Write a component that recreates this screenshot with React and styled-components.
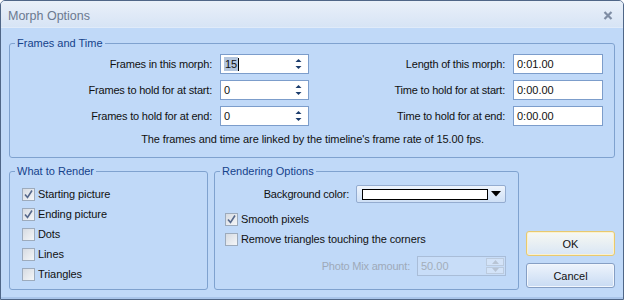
import React from 'react';
import styled, { createGlobalStyle } from 'styled-components';

const frameRows = [
  { label: 'Frames in this morph:', value: '15', selected: true, timeLabel: 'Length of this morph:', time: '0:01.00' },
  { label: 'Frames to hold for at start:', value: '0', timeLabel: 'Time to hold for at start:', time: '0:00.00' },
  { label: 'Frames to hold for at end:', value: '0', timeLabel: 'Time to hold for at end:', time: '0:00.00' },
];

const renderItems = [
  { label: 'Starting picture', checked: true },
  { label: 'Ending picture', checked: true },
  { label: 'Dots', checked: false },
  { label: 'Lines', checked: false },
  { label: 'Triangles', checked: false },
];

const SpinArrows = ({ color = '#1b3c6c' }) => (
  <svg width="7" height="12" viewBox="0 0 7 12">
    <polygon points="3.5,1 6.5,4 0.5,4" fill={color} />
    <polygon points="0.5,8 6.5,8 3.5,11" fill={color} />
  </svg>
);

const CheckBox = ({ checked, label }) => (
  <CheckRow>
    <Box>
      {checked && (
        <svg width="11" height="11" viewBox="0 0 11 11">
          <path d="M2 5.5 L4.5 8.5 L9 1.5" fill="none" stroke="#56698c" strokeWidth="1.6" />
        </svg>
      )}
    </Box>
    <span>{label}</span>
  </CheckRow>
);

const App = () => {
  return (
    <>
      <GlobalStyle />
      <Window>
        <TitleBar>
          <Title>Morph Options</Title>
          <CloseIcon width="10" height="9" viewBox="0 0 10 9">
            <path d="M1.5 1 L8.5 8 M8.5 1 L1.5 8" stroke="#7f8da4" strokeWidth="2.2" />
          </CloseIcon>
        </TitleBar>

        <Body>
          <Group>
            <GroupTitle>Frames and Time</GroupTitle>
            <FramesContent>
              <FrameGrid>
                {frameRows.map(row => (
                  <React.Fragment key={row.label}>
                    <Label>{row.label}</Label>
                    <Field>
                      <FieldText>
                        {row.selected ? <Selected>{row.value}</Selected> : row.value}
                        {row.selected && <Caret />}
                      </FieldText>
                      <SpinArrows />
                    </Field>
                    <Label>{row.timeLabel}</Label>
                    <Field>
                      <FieldText>{row.time}</FieldText>
                    </Field>
                  </React.Fragment>
                ))}
              </FrameGrid>
              <Info>The frames and time are linked by the timeline's frame rate of 15.00 fps.</Info>
            </FramesContent>
          </Group>

          <BottomRow>
            <Group $width={199}>
              <GroupTitle>What to Render</GroupTitle>
              <RenderList>
                {renderItems.map(item => (
                  <CheckBox key={item.label} checked={item.checked} label={item.label} />
                ))}
              </RenderList>
            </Group>

            <Group $width={305}>
              <GroupTitle>Rendering Options</GroupTitle>
              <OptionsContent>
                <RightRow>
                  <Label>Background color:</Label>
                  <ColorPicker>
                    <Swatch />
                    <svg width="10" height="6" viewBox="0 0 10 6">
                      <polygon points="0,0 10,0 5,5.5" fill="#000" />
                    </svg>
                  </ColorPicker>
                </RightRow>
                <Spacer $h={5} />
                <CheckBox checked label="Smooth pixels" />
                <CheckBox checked={false} label="Remove triangles touching the corners" />
                <Spacer $h={7} />
                <RightRow>
                  <Label $disabled>Photo Mix amount:</Label>
                  <Field $disabled>
                    <FieldText>50.00</FieldText>
                    <SpinButtons>
                      <SpinHalf>
                        <svg width="7" height="4" viewBox="0 0 7 4"><polygon points="3.5,0 7,4 0,4" fill="#b8c4d4" /></svg>
                      </SpinHalf>
                      <SpinHalf>
                        <svg width="7" height="4" viewBox="0 0 7 4"><polygon points="0,0 7,0 3.5,4" fill="#b8c4d4" /></svg>
                      </SpinHalf>
                    </SpinButtons>
                  </Field>
                </RightRow>
              </OptionsContent>
            </Group>

            <ButtonColumn>
              <Button $default>OK</Button>
              <Button>Cancel</Button>
            </ButtonColumn>
          </BottomRow>
        </Body>
      </Window>
    </>
  );
};

export default App;

// Styled Components
const GlobalStyle = createGlobalStyle`
  html, body {
    margin: 0;
    padding: 0;
    background: #ffffff;
  }
  body {
    font-family: "Liberation Sans", Arial, sans-serif;
    font-size: 11px;
    color: #111;
  }
  * {
    box-sizing: border-box;
  }
`;

const Window = styled.div`
  width: 624px;
  height: 300px;
  display: flex;
  flex-direction: column;
  border: 1px solid #4f6687;
  border-radius: 5px 5px 0 0;
  background: #c0d9f8;
  overflow: hidden;
`;

const TitleBar = styled.div`
  height: 27px;
  flex: none;
  display: flex;
  align-items: center;
  justify-content: space-between;
  padding: 0 10px 0 7px;
  background: linear-gradient(#e9f0f9, #d7e4f5);
  border-bottom: 1px solid #e0ebf9;
`;

const Title = styled.div`
  font-size: 12.5px;
  color: #6b7990;
  padding-top: 3px;
`;

const CloseIcon = styled.svg`
  margin-top: 2px;
`;

const Body = styled.div`
  flex: 1;
  display: flex;
  flex-direction: column;
  padding: 8px 8px 9px 8px;
  box-shadow: inset 0 -2px 0 #a9c5ea;
`;

const Group = styled.fieldset`
  margin: 0;
  padding: 0;
  min-width: 0;
  width: ${({ $width }) => ($width ? `${$width}px` : 'auto')};
  flex: none;
  border: 1px solid #7fa2cf;
  border-radius: 3px;
`;

const GroupTitle = styled.legend`
  margin-left: 5px;
  padding: 0 2px;
  line-height: 14px;
  font-size: 11px;
  color: #15428b;
`;

const FramesContent = styled.div`
  padding: 4px 11px 11px 12px;
`;

const FrameGrid = styled.div`
  display: grid;
  grid-template-columns: 190px 89px 1fr 90px;
  column-gap: 8px;
  row-gap: 6px;
  align-items: center;
`;

const Label = styled.div`
  text-align: right;
  white-space: nowrap;
  letter-spacing: -0.2px;
  line-height: 14px;
  color: ${({ $disabled }) => ($disabled ? '#9ea9b8' : '#111')};
`;

const Field = styled.div`
  height: 20px;
  width: ${({ $disabled }) => ($disabled ? '89px' : 'auto')};
  display: flex;
  align-items: center;
  padding: 0 ${({ $disabled }) => ($disabled ? '1px' : '6px')} 0 3px;
  border: 1px solid ${({ $disabled }) => ($disabled ? '#a9bdd8' : '#7c9dcb')};
  background: ${({ $disabled }) => ($disabled ? '#c8ddf8' : '#fff')};
  color: ${({ $disabled }) => ($disabled ? '#a3adba' : '#111')};
`;

const FieldText = styled.div`
  flex: 1;
  display: flex;
  align-items: center;
  line-height: 14px;
`;

const Selected = styled.span`
  background: #b3c5dd;
  padding: 0 1px;
`;

const Caret = styled.span`
  width: 1px;
  height: 13px;
  background: #000;
`;

const Info = styled.div`
  margin-top: 6px;
  text-align: center;
  line-height: 14px;
  letter-spacing: -0.1px;
`;

const BottomRow = styled.div`
  flex: 1;
  display: flex;
  gap: 6px;
  margin-top: 6px;
`;

const RenderList = styled.div`
  display: flex;
  flex-direction: column;
  padding: 6px 0 0 12px;
`;

const CheckRow = styled.div`
  height: 20px;
  display: flex;
  align-items: center;
  gap: 3px;
  letter-spacing: -0.1px;
`;

const Box = styled.span`
  width: 13px;
  height: 13px;
  flex: none;
  display: flex;
  align-items: center;
  justify-content: center;
  border: 1px solid #9dabbc;
  background: linear-gradient(135deg, #d6dbe2, #f4f6f8);
`;

const OptionsContent = styled.div`
  display: flex;
  flex-direction: column;
  padding: 6px 12px 0 10px;
`;

const RightRow = styled.div`
  height: 20px;
  display: flex;
  align-items: center;
  justify-content: flex-end;
  gap: 7px;
`;

const Spacer = styled.div`
  height: ${({ $h }) => $h}px;
`;

const ColorPicker = styled.div`
  width: 150px;
  height: 18px;
  display: flex;
  align-items: center;
  gap: 3px;
  padding: 0 4px 0 5px;
  border: 1px solid #94acd0;
  border-radius: 2px;
  background: linear-gradient(#eef4fc, #cfe0f6);
`;

const Swatch = styled.div`
  flex: 1;
  height: 11px;
  background: #fff;
  border: 1px solid #000;
`;

const SpinButtons = styled.div`
  width: 18px;
  height: 16px;
  display: flex;
  flex-direction: column;
  gap: 1px;
`;

const SpinHalf = styled.div`
  flex: 1;
  display: flex;
  align-items: center;
  justify-content: center;
  border: 1px solid #bccbde;
  background: #d3e3f8;
`;

const ButtonColumn = styled.div`
  width: 89px;
  margin-left: 1px;
  display: flex;
  flex-direction: column;
  justify-content: flex-end;
  gap: 7px;
  padding-bottom: 2px;
`;

const Button = styled.div`
  height: 25px;
  display: flex;
  align-items: center;
  justify-content: center;
  font-size: 11px;
  color: #111;
  border: 1px solid ${({ $default }) => ($default ? '#e8c96e' : '#869fc4')};
  border-radius: 3px;
  background: ${({ $default }) =>
    $default ? 'linear-gradient(#f7f8f2, #d9e6f5)' : 'linear-gradient(#eef4fc, #c8dbf3)'};
  box-shadow: inset 0 0 0 1px ${({ $default }) => ($default ? '#fbf1cf' : '#f2f7fd')};
`;
